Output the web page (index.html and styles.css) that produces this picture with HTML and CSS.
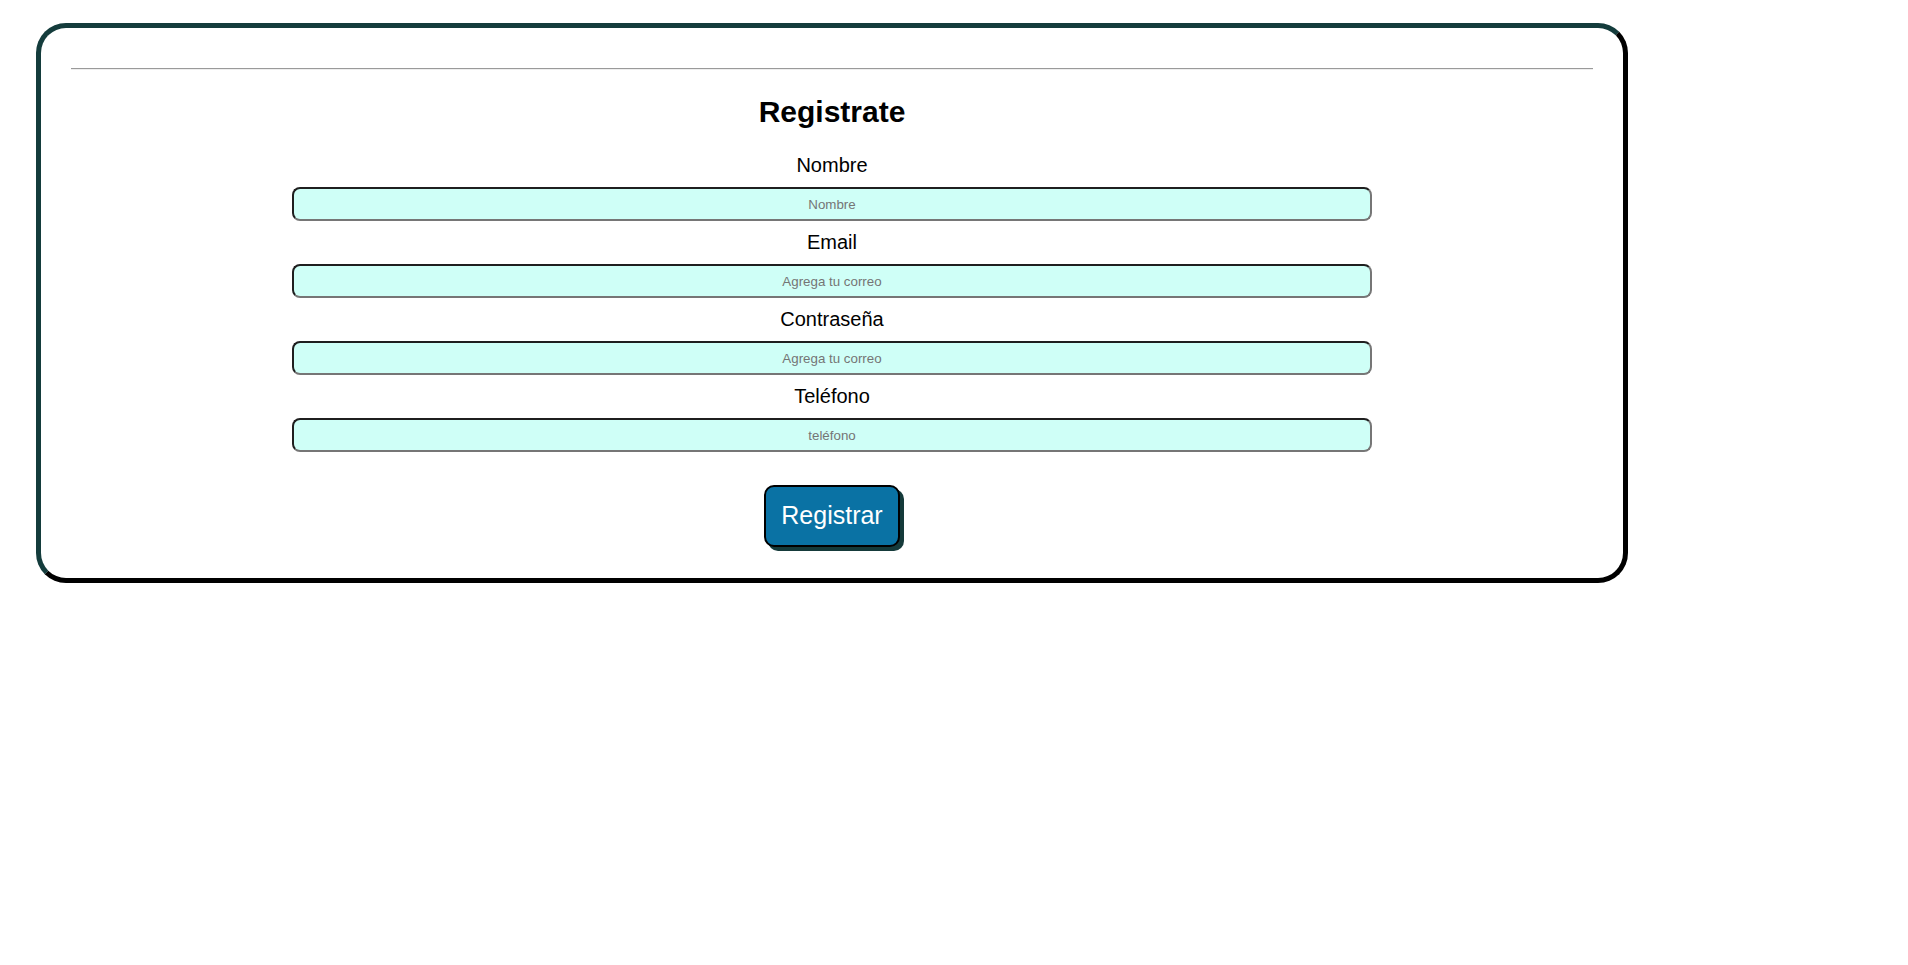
FILE: index.html
```html
<!DOCTYPE html>
<html lang="es">
<head>
<meta charset="utf-8">
<title>Registrate</title>
<link rel="stylesheet" href="styles.css">
</head>
<body>
<div class="card">
  <hr class="divider">
  <h1 class="title">Registrate</h1>
  <form class="form">
    <label class="label" for="nombre">Nombre</label>
    <input class="field" id="nombre" type="text" placeholder="Nombre">
    <label class="label" for="email">Email</label>
    <input class="field" id="email" type="email" placeholder="Agrega tu correo">
    <label class="label" for="pass">Contraseña</label>
    <input class="field" id="pass" type="password" placeholder="Agrega tu correo">
    <label class="label" for="tel">Teléfono</label>
    <input class="field" id="tel" type="tel" placeholder="teléfono">
    <button class="submit" type="button">Registrar</button>
  </form>
</div>
</body>
</html>
```

FILE: styles.css
```css
html, body {
  margin: 0;
  padding: 0;
  background: #ffffff;
}
body {
  padding: 23px 0 0 36px;
  font-family: "Liberation Sans", Arial, sans-serif;
  color: #000;
}
.card {
  box-sizing: border-box;
  width: 1592px;
  border: 5px solid;
  border-color: #143c3c #000000 #000000 #143c3c;
  border-radius: 30px;
  padding: 40px 30px 31px;
  background: #fff;
}
.divider {
  margin: 0;
  height: 0;
  border: 0;
  border-top: 1px solid #9a9a9a;
  border-bottom: 1px solid #eeeeee;
}
.title {
  margin: 25px 0 0;
  font-size: 30px;
  line-height: 34px;
  font-weight: bold;
  text-align: center;
}
.form {
  display: flex;
  flex-direction: column;
  align-items: center;
  margin-top: 25px;
}
.label {
  display: block;
  font-size: 20px;
  line-height: 23px;
  margin-bottom: 10px;
}
.field {
  box-sizing: border-box;
  width: 1080px;
  height: 34px;
  margin: 0 0 10px;
  padding: 0 8px;
  background: #cffff7;
  border: 2px solid;
  border-color: #1f1f1f #767676 #767676 #1f1f1f;
  border-radius: 8px;
  font-family: "Liberation Sans", Arial, sans-serif;
  font-size: 13.333px;
  text-align: center;
  outline: none;
}
.field::placeholder {
  color: #757575;
}
.field:last-of-type {
  margin-bottom: 0;
}
.submit {
  margin-top: 33px;
  padding: 14px 15px 15px;
  background: #0a72a4;
  color: #ffffff;
  border: 2px solid #000;
  border-radius: 10px;
  box-shadow: 4px 4px 0 #153a3a;
  font-family: "Liberation Sans", Arial, sans-serif;
  font-size: 25px;
  line-height: 29px;
  cursor: pointer;
}
```
